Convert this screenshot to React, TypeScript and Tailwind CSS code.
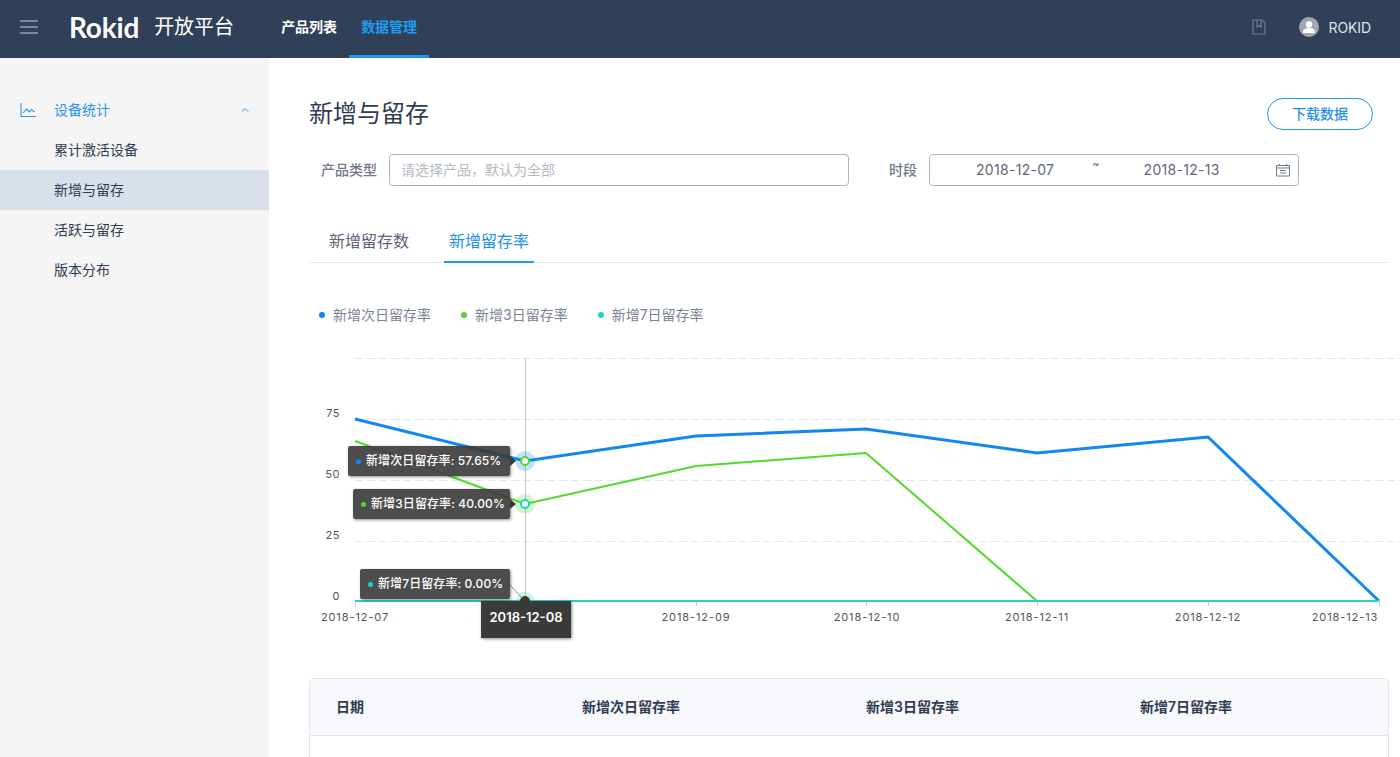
import { ChevronUp } from "lucide-react";

const SANS = "font-['Inter','Noto_Sans_CJK_SC',sans-serif]";

const blue = "355,419 525,461 696,436 866,429 1037,453 1208,437 1379,601";
const green = "355,441 525,504 696,466 866,453 1037,601 1379,601";

function Chart() {
  return (
    <svg viewBox="309 340 1091 300" className="block h-[300px] w-[1091px]">
      {[358.5, 419.5, 480.5, 541.5].map((y) => (
        <line key={y} x1="355" x2="1400" y1={y} y2={y} stroke="#e6e6e6" strokeDasharray="8 4" />
      ))}
      {[
        ["75", 417],
        ["50", 478],
        ["25", 539],
        ["0", 600],
      ].map(([t, y]) => (
        <text key={t} x="340" y={y} textAnchor="end" fontSize="11" fill="#555" letterSpacing=".5">
          {t}
        </text>
      ))}
      {[
        ["2018-12-07", 355],
        ["2018-12-09", 696],
        ["2018-12-10", 867],
        ["2018-12-11", 1037],
        ["2018-12-12", 1208],
        ["2018-12-13", 1345],
      ].map(([t, x]) => (
        <text key={t} x={x} y="621" textAnchor="middle" fontSize="11" fill="#555" letterSpacing=".9">
          {t}
        </text>
      ))}
      {[355, 525, 696, 866, 1037, 1208, 1379].map((x) => (
        <line key={x} x1={x + 0.5} x2={x + 0.5} y1="601" y2="606" stroke="#ccc" />
      ))}
      <line x1="525.5" x2="525.5" y1="358" y2="601" stroke="#c4c4c4" />
      <polyline points={green} fill="none" stroke="#52d92a" strokeWidth="2" />
      <polyline points={blue} fill="none" stroke="#1088f2" strokeWidth="3" />
      <line x1="355" x2="1379" y1="601" y2="601" stroke="#2ad1c8" strokeWidth="2" />
      <circle cx="525" cy="461" r="10" fill="#1088f2" fillOpacity=".25" />
      <circle cx="525" cy="461" r="4" fill="#fff" stroke="#52d92a" strokeWidth="2" />
      <circle cx="525" cy="504" r="10" fill="#52d92a" fillOpacity=".25" />
      <circle cx="525" cy="504" r="4" fill="#fff" stroke="#13d6c6" strokeWidth="2" />
      <circle cx="525" cy="601" r="9" fill="#13d6c6" fillOpacity=".25" />
      <circle cx="525" cy="601" r="5" fill="#4a3d28" />
      <line x1="510" x2="522" y1="585" y2="598" stroke="#8a8a8a" />
    </svg>
  );
}

function Tip({ className, dot, label, value, arrow }: { className: string; dot: string; label: string; value: string; arrow?: boolean }) {
  return (
    <div
      className={`absolute flex h-[30px] items-center whitespace-nowrap rounded-[2px] bg-[#3a3a3a]/90 pl-[8px] text-[12px] font-medium tracking-[0.1px] text-white shadow-[1px_1px_3px_rgba(0,0,0,0.45)] ${className}`}
    >
      <span className={`mr-[5px] h-[5px] w-[5px] rounded-full ${dot}`} />
      <span className="pb-[1px]">
        {label}: {value}
      </span>
      {arrow && (
        <span className="absolute left-full top-[10px] h-0 w-0 border-y-[5px] border-l-[6px] border-y-transparent border-l-[#3a3a3a]" />
      )}
    </div>
  );
}

function Legend({ dot, text }: { dot: string; text: string }) {
  return (
    <div className="flex items-center gap-[8px]">
      <span className={`h-[6px] w-[6px] rounded-full ${dot}`} />
      <span className="pb-[2px]">{text}</span>
    </div>
  );
}

export default function App() {
  return (
    <div className={`flex h-screen flex-col overflow-hidden bg-white text-[14px] text-[#2f3c52] ${SANS}`}>
      <header className="flex h-[58px] shrink-0 items-center bg-[#2f4058] pb-[4px] text-white">
        <div className="ml-[20px] flex w-[18px] flex-col gap-[4px]">
          <span className="h-[2px] bg-[#7d8999]" />
          <span className="h-[2px] bg-[#7d8999]" />
          <span className="h-[2px] bg-[#7d8999]" />
        </div>
        <span className="ml-[31px] font-['Lato',sans-serif] text-[28px] font-bold leading-none tracking-[-0.2px]">Rokid</span>
        <span className="ml-[15px] text-[20px] leading-none">开放平台</span>
        <nav className="ml-[35px] flex h-[58px] self-start">
          <a className="flex items-center px-[12px] pb-[6px] font-semibold">产品列表</a>
          <a className="flex items-center border-b-[3px] border-[#1b9aee] px-[12px] pb-[3px] font-semibold text-[#1f9bf0]">数据管理</a>
        </nav>
        <svg viewBox="0 0 14 16" className="ml-auto h-[16px] w-[14px]" fill="none" stroke="#6f7c8e" strokeWidth="1.2">
          <path d="M1 1h9l3 3v11H1z" />
          <path d="M5 1v7l2-1.5L9 8V1" />
        </svg>
        <div className="ml-[33px] flex h-[20px] w-[20px] items-center justify-center overflow-hidden rounded-full bg-[#a3a8b0]">
          <svg viewBox="0 0 20 20" className="h-[20px] w-[20px]" fill="#fff">
            <circle cx="10" cy="7.5" r="3.2" />
            <path d="M4 15c0-3 3-4 6-4s6 1 6 4v1H4z" />
          </svg>
        </div>
        <span className="ml-[10px] mr-[29px] text-[14px] tracking-[-0.1px] text-[#dfe3e8]">ROKID</span>
      </header>
      <div className="flex min-h-0 flex-1">
        <aside className="w-[269px] shrink-0 bg-[#f5f5f5] pt-[32px]">
          <div className="flex h-[40px] items-center pl-[20px] pr-[18px] text-[#2a94ea]">
            <svg viewBox="0 0 16 16" className="h-[16px] w-[16px]" fill="none" stroke="#2a94ea" strokeWidth="1.1">
              <path d="M1 1v13.5h15" />
              <path d="M3 11l3.5-4 3 3 2-2.5 3 2.5" />
            </svg>
            <span className="ml-[18px] pb-[2px]">设备统计</span>
            <ChevronUp className="ml-auto h-[12px] w-[12px]" strokeWidth={2} />
          </div>
          <div className="flex h-[40px] items-center pb-[2px] pl-[54px]">累计激活设备</div>
          <div className="flex h-[40px] items-center bg-[#d9e0ea] pb-[2px] pl-[54px]">新增与留存</div>
          <div className="flex h-[40px] items-center pb-[2px] pl-[54px]">活跃与留存</div>
          <div className="flex h-[40px] items-center pb-[2px] pl-[54px]">版本分布</div>
        </aside>
        <main className="relative min-w-0 flex-1 pl-[40px] pr-[11px]">
          <div className="flex items-center justify-between pr-[16px] pt-[40px]">
            <h1 className="text-[24px] leading-[32px] text-[#2f3c52]">新增与留存</h1>
            <button className="flex h-[32px] w-[106px] items-center justify-center rounded-full border border-[#1b9aee] pb-[2px] font-medium text-[#1f8fe8]">下载数据</button>
          </div>
          <div className="mt-[24px] flex h-[32px] items-center text-[#6f7a8c]">
            <span className="ml-[12px] pb-[2px] font-medium">产品类型</span>
            <div className="ml-[12px] flex h-[32px] w-[460px] items-center rounded-[4px] border border-[#a9b4c8] pb-[2px] pl-[11px] text-[#b4b9c2]">请选择产品，默认为全部</div>
            <span className="ml-[40px] pb-[2px] font-medium">时段</span>
            <div className="relative ml-[12px] flex h-[32px] w-[370px] items-center rounded-[4px] border border-[#a9b4c8] pb-[2px] text-[#5f6878]">
              <span className="ml-[46px] tracking-[0.3px]">2018-12-07</span>
              <span className="ml-[38px] -translate-y-[5px] text-[11px]">~</span>
              <span className="ml-[44px] tracking-[0.3px]">2018-12-13</span>
              <svg viewBox="0 0 14 14" className="absolute right-[8px] top-[8px] h-[14px] w-[14px]" fill="none" stroke="#6f7a8c">
                <path d="M.5 2.5h13v10.5H.5z" />
                <path d="M.5 5h13M3.5 1v2M10.5 1v2M4 7.5h6M4 10h6" />
              </svg>
            </div>
          </div>
          <div className="mt-[44px] flex h-[33px] border-b border-[#e6e8ec] text-[16px] leading-[22px]">
            <div className="ml-[20px] text-[#5a6474]">新增留存数</div>
            <div className="relative ml-[40px] text-[#1f8fe8]">
              新增留存率
              <span className="absolute -left-[5px] -right-[5px] bottom-[-1px] h-[2px] bg-[#1b9aee]" />
            </div>
          </div>
          <div className="mt-[42px] flex h-[20px] items-center pl-[10px] text-[#7a8494]">
            <Legend dot="bg-[#1088f2]" text="新增次日留存率" />
            <div className="ml-[30px]">
              <Legend dot="bg-[#52d92a]" text="新增3日留存率" />
            </div>
            <div className="ml-[30px]">
              <Legend dot="bg-[#13d6c6]" text="新增7日留存率" />
            </div>
          </div>
          <div className="relative mt-[15px] h-[300px]">
            <Chart />
            <Tip arrow className="left-[39px] top-[106px] w-[162px]" dot="bg-[#1088f2]" label="新增次日留存率" value="57.65%" />
            <Tip arrow className="left-[44px] top-[149px] w-[157px]" dot="bg-[#52d92a]" label="新增3日留存率" value="40.00%" />
            <Tip className="left-[51px] top-[229px] w-[150px]" dot="bg-[#13d6c6]" label="新增7日留存率" value="0.00%" />
            <div className="absolute left-[172px] top-[261px] flex h-[37px] w-[90px] items-center justify-center bg-[#3a3a3a] pb-[3px] text-[13px] font-semibold text-white shadow-[1px_1px_3px_rgba(0,0,0,0.45)]">
              2018-12-08
            </div>
          </div>
          <div className="mt-[38px] h-[200px] rounded-t-[4px] border border-[#e1e5ee]">
            <div className="grid h-[57px] grid-cols-[246px_284px_274px_1fr] items-center border-b border-[#e1e5ee] bg-[#f7f8fb] pb-[2px] pl-[26px] font-semibold text-[#2f3c52]">
              <span>日期</span>
              <span>新增次日留存率</span>
              <span>新增3日留存率</span>
              <span>新增7日留存率</span>
            </div>
          </div>
        </main>
      </div>
    </div>
  );
}
